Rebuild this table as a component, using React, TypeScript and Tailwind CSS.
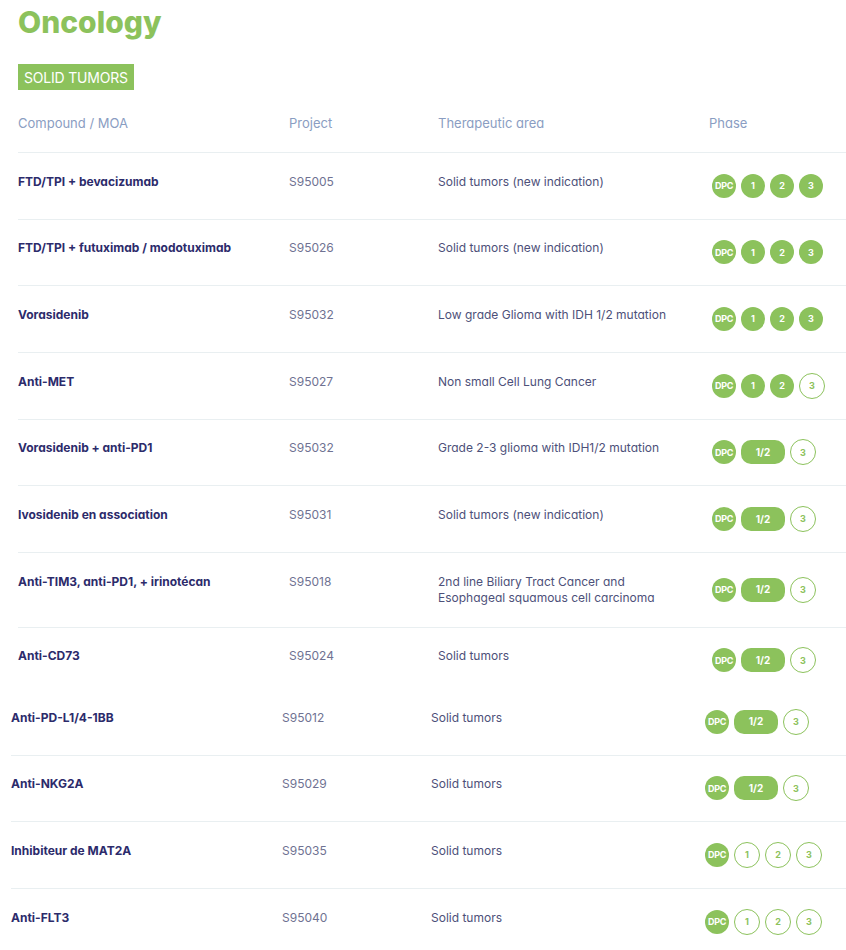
import React from 'react'

type Phase = 'full' | 'p2' | 'combo' | 'dpc'

type Row = {
  compound: string
  project: string
  area: string[]
  phase: Phase
}

const topRows: Row[] = [
  { compound: 'FTD/TPI + bevacizumab', project: 'S95005', area: ['Solid tumors (new indication)'], phase: 'full' },
  { compound: 'FTD/TPI + futuximab / modotuximab', project: 'S95026', area: ['Solid tumors (new indication)'], phase: 'full' },
  { compound: 'Vorasidenib', project: 'S95032', area: ['Low grade Glioma with IDH 1/2 mutation'], phase: 'full' },
  { compound: 'Anti-MET', project: 'S95027', area: ['Non small Cell Lung Cancer'], phase: 'p2' },
  { compound: 'Vorasidenib + anti-PD1', project: 'S95032', area: ['Grade 2-3 glioma with IDH1/2 mutation'], phase: 'combo' },
  { compound: 'Ivosidenib en association', project: 'S95031', area: ['Solid tumors (new indication)'], phase: 'combo' },
  {
    compound: 'Anti-TIM3, anti-PD1, + irinotécan',
    project: 'S95018',
    area: ['2nd line Biliary Tract Cancer and', 'Esophageal squamous cell carcinoma'],
    phase: 'combo',
  },
  { compound: 'Anti-CD73', project: 'S95024', area: ['Solid tumors'], phase: 'combo' },
]

const bottomRows: Row[] = [
  { compound: 'Anti-PD-L1/4-1BB', project: 'S95012', area: ['Solid tumors'], phase: 'combo' },
  { compound: 'Anti-NKG2A', project: 'S95029', area: ['Solid tumors'], phase: 'combo' },
  { compound: 'Inhibiteur de MAT2A', project: 'S95035', area: ['Solid tumors'], phase: 'dpc' },
  { compound: 'Anti-FLT3', project: 'S95040', area: ['Solid tumors'], phase: 'dpc' },
]

function Dot({ label, filled }: { label: string; filled: boolean }) {
  if (filled) {
    return (
      <span className="flex h-6 w-6 shrink-0 items-center justify-center rounded-full bg-[#8cc25c] text-[9px] font-bold text-white">
        {label}
      </span>
    )
  }
  return (
    <span className="flex h-[26px] w-[26px] shrink-0 items-center justify-center rounded-full border border-[#8cc25c] text-[9px] font-bold text-[#8cc25c]">
      {label}
    </span>
  )
}

function PhaseBadges({ phase }: { phase: Phase }) {
  return (
    <div className="flex h-6 items-center gap-[5px] self-center">
      <span className="flex h-6 w-6 shrink-0 items-center justify-center rounded-full bg-[#8cc25c] text-[9px] font-bold tracking-[-0.3px] text-white">
        DPC
      </span>
      {phase === 'combo' ? (
        <>
          <span className="flex h-6 w-[44px] shrink-0 items-center justify-center rounded-[10px] bg-[#8cc25c] text-[10px] font-bold text-white">
            1/2
          </span>
          <Dot label="3" filled={false} />
        </>
      ) : (
        <>
          <Dot label="1" filled={phase !== 'dpc'} />
          <Dot label="2" filled={phase !== 'dpc'} />
          <Dot label="3" filled={phase === 'full'} />
        </>
      )}
    </div>
  )
}

function TableRow({ row, border }: { row: Row; border: boolean }) {
  return (
    <div className={`flex items-start py-[20.83px] ${border ? 'border-b border-[#e9eff1]' : ''}`}>
      <div className="w-[271px] shrink-0 text-[12px] font-bold leading-4 text-[#2c2b6b]">{row.compound}</div>
      <div className="w-[149px] shrink-0 text-[12px] leading-4 text-[#6f7292]">{row.project}</div>
      <div className="w-[274px] shrink-0 text-[12px] leading-4 text-[#4d5079]">
        {row.area.map((line, i) => (
          <div key={i}>{line}</div>
        ))}
      </div>
      <PhaseBadges phase={row.phase} />
    </div>
  )
}

export default function App() {
  return (
    <div className="min-h-[950px] bg-white font-['Inter','Noto_Sans',sans-serif] [font-feature-settings:'cv11']">
      {/* first block */}
      <div className="h-[689px] overflow-hidden pl-[18px]">
        <h1 className="pt-[4px] text-[30px] font-extrabold leading-[36px] text-[#8cc25c]">Oncology</h1>
        <div className="mt-[24px] inline-flex h-[26px] items-center bg-[#8cc25c] px-[6px] text-[14px] tracking-[-0.2px] text-white">
          SOLID TUMORS
        </div>
        <div className="mt-[25px] flex border-b border-[#e9eff1] pb-[21px] text-[13px] leading-4 text-[#8a9dc2]">
          <div className="w-[271px] shrink-0">Compound / MOA</div>
          <div className="w-[149px] shrink-0">Project</div>
          <div className="w-[271px] shrink-0">Therapeutic area</div>
          <div>Phase</div>
        </div>
        {topRows.map((row, i) => (
          <TableRow key={row.compound} row={row} border={i < topRows.length - 1} />
        ))}
      </div>

      {/* second block */}
      <div className="pl-[11px]">
        {bottomRows.map((row, i) => (
          <TableRow key={row.compound} row={row} border={i < bottomRows.length - 1} />
        ))}
      </div>
    </div>
  )
}
